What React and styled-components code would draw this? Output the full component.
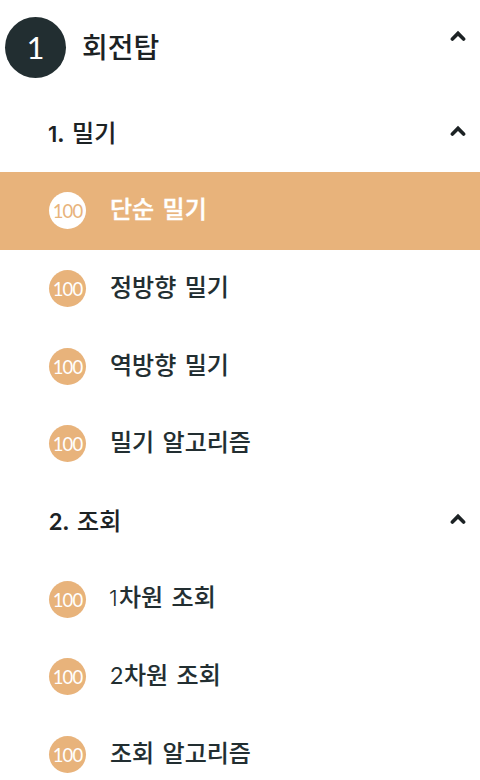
import React from 'react';
import styled, { createGlobalStyle } from 'styled-components';

const INK = '#222e31';
const SAND = '#e8b37b';

const GlobalStyle = createGlobalStyle`
  * { box-sizing: border-box; }
  body { margin: 0; background: #fff; overflow: hidden; }
`;

const Menu = styled.nav`
  width: 480px;
  height: 780px;
  overflow: hidden;
  background: #fff;
  color: ${INK};
  font-family: 'Noto Sans CJK KR', sans-serif;
`;

const Header = styled.header`
  display: flex;
  height: 94.4px;
  padding: 17px 14px 0 5px;
`;

const ChapterNumber = styled.span`
  display: flex;
  flex: none;
  align-items: center;
  justify-content: center;
  width: 61px;
  height: 61px;
  border-radius: 50%;
  background: ${INK};
  color: #fff;
  font: 400 31px/61px Lato, sans-serif;
`;

const ChapterTitle = styled.h1`
  flex: 1;
  margin: 0 0 0 16px;
  color: #1c2224;
  font-size: 28px;
  font-weight: 500;
  line-height: 58px;
`;

const HeaderToggle = styled.span`
  display: flex;
  height: 16px;
  margin-top: 11px;
`;

const Row = styled.div`
  display: flex;
  align-items: center;
  height: 77.65px;
  padding: 0 14px 0 49px;
  background: ${(p) => (p.$active ? SAND : 'transparent')};
  color: ${(p) => (p.$active ? '#fff' : INK)};
`;

const GroupRow = styled(Row)`
  color: #1c2224;

  svg {
    margin-bottom: 4px;
  }
`;

const Score = styled.span`
  flex: none;
  width: 37px;
  height: 37px;
  margin-right: 24px;
  border-radius: 50%;
  background: ${(p) => (p.$active ? '#fff' : SAND)};
  color: ${(p) => (p.$active ? SAND : '#fff')};
  font: 400 18.5px/38px Lato, sans-serif;
  letter-spacing: -0.9px;
  text-align: center;
`;

const Label = styled.span`
  flex: 1;
  padding-bottom: ${(p) => (p.$group ? 1 : 5)}px;
  font-size: 24px;
  font-weight: 500;
  line-height: 36px;
  word-spacing: 3px;
  white-space: nowrap;
  -webkit-text-stroke: ${(p) => (p.$active ? 0.4 : 0.12)}px currentColor;
`;

const Digit = styled.span`
  display: inline-block;
  width: ${(p) => (p.$narrow ? 9 : 14)}px;
  font-family: ${(p) => (p.$narrow ? 'Inter' : 'Lato')}, sans-serif;
  font-size: ${(p) => (p.$narrow ? 22 : 23)}px;
  font-weight: ${(p) => (p.$bold ? (p.$narrow ? 600 : 700) : p.$narrow ? 300 : 400)};
  text-indent: ${(p) => (p.$narrow ? -1 : 0)}px;
  -webkit-text-stroke-width: 0;
`;

const Period = styled.span`
  font-family: Lato, sans-serif;
  font-weight: 700;
`;

const Chevron = () => (
  <svg width="16" height="16" viewBox="0 0 16 16" fill="none" stroke="#1c2224" strokeWidth="3.6" strokeLinecap="round">
    <path d="M2.4 11 8 5.4l5.6 5.6" />
  </svg>
);

const groups = [
  {
    number: '1',
    title: '밀기',
    lessons: [
      { title: '단순 밀기', active: true },
      { title: '정방향 밀기' },
      { title: '역방향 밀기' },
      { title: '밀기 알고리즘' },
    ],
  },
  {
    number: '2',
    title: '조회',
    lessons: [
      { digit: '1', title: '차원 조회' },
      { digit: '2', title: '차원 조회' },
      { title: '조회 알고리즘' },
    ],
  },
];

export default function App() {
  return (
    <Menu>
      <GlobalStyle />
      <Header>
        <ChapterNumber>1</ChapterNumber>
        <ChapterTitle>회전탑</ChapterTitle>
        <HeaderToggle><Chevron /></HeaderToggle>
      </Header>
      {groups.map((group) => (
        <section key={group.number}>
          <GroupRow>
            <Label $group>
              <Digit $bold $narrow={group.number === '1'}>{group.number}</Digit>
              <Period>.</Period> {group.title}
            </Label>
            <Chevron />
          </GroupRow>
          {group.lessons.map((lesson) => (
            <Row key={(lesson.digit || '') + lesson.title} $active={lesson.active}>
              <Score $active={lesson.active}>100</Score>
              <Label $active={lesson.active}>
                {lesson.digit && <Digit $narrow={lesson.digit === '1'}>{lesson.digit}</Digit>}
                {lesson.title}
              </Label>
            </Row>
          ))}
        </section>
      ))}
    </Menu>
  );
}
